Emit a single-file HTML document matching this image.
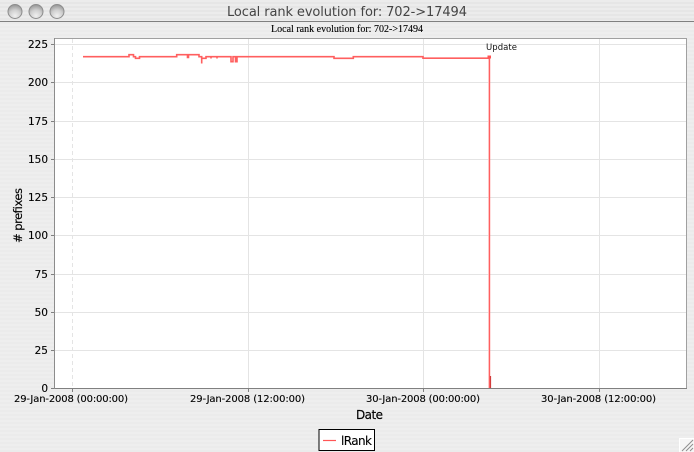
<!DOCTYPE html>
<html><head><meta charset="utf-8"><style>
html,body{margin:0;padding:0;width:694px;height:452px;overflow:hidden;background:#eee}
svg{display:block}
text{font-family:"DejaVu Sans","Liberation Sans",sans-serif}
</style></head><body>
<svg width="694" height="452" viewBox="0 0 694 452" xmlns="http://www.w3.org/2000/svg">
<defs>
<pattern id="st" width="4" height="4" patternUnits="userSpaceOnUse"><rect width="4" height="2" fill="#eeeeee"/><rect y="2" width="4" height="2" fill="#ebebeb"/></pattern>
<pattern id="tb" width="4" height="4" patternUnits="userSpaceOnUse"><rect width="4" height="2" fill="#ececec"/><rect y="2" width="4" height="2" fill="#e6e6e6"/></pattern>
<radialGradient id="b" cx="50%" cy="80%" r="75%"><stop offset="0" stop-color="#f0f0f0"/><stop offset="0.55" stop-color="#cfcfcf"/><stop offset="1" stop-color="#9a9a9a"/></radialGradient>
</defs>
<rect width="694" height="452" fill="url(#st)"/>
<rect width="694" height="21" fill="url(#tb)"/>
<rect y="21" width="694" height="1" fill="#808080"/>
<g stroke="#8c8c8c" stroke-width="1" fill="url(#b)"><circle cx="15" cy="11.5" r="7"/><circle cx="36" cy="11.5" r="7"/><circle cx="57" cy="11.5" r="7"/></g>
<text x="227" y="16" font-size="13" fill="#454545" textLength="240" lengthAdjust="spacing">Local rank evolution for: 702-&gt;17494</text>
<text x="271" y="32" font-size="10" fill="#000" stroke="#000" stroke-width="0.12" style="font-family:'Liberation Serif',serif" textLength="152" lengthAdjust="spacing">Local rank evolution for: 702-&gt;17494</text>

<rect x="54.5" y="38.5" width="632" height="350" fill="#fff" stroke="#a0a0a0"/>
<g stroke="#e4e4e4" stroke-width="1">
<path d="M55 44.5H686M55 82.5H686M55 121.5H686M55 159.5H686M55 197.5H686M55 235.5H686M55 274.5H686M55 312.5H686M55 350.5H686"/>
<path d="M248.5 39V388M423.5 39V388M599.5 39V388"/>
<path d="M72.5 39V388" stroke-dasharray="4 3"/>
</g>
<path d="M54 388.5H687" stroke="#808080"/>
<path d="M54.5 38V389" stroke="#8c8c8c"/>
<g stroke="#808080"><path d="M51 44.5H54M51 82.5H54M51 121.5H54M51 159.5H54M51 197.5H54M51 235.5H54M51 274.5H54M51 312.5H54M51 350.5H54M51 388.5H54M72.5 389V392M248.5 389V392M423.5 389V392M599.5 389V392"/></g>

<path fill="none" stroke="#ff5f5f" stroke-width="1.6" d="M83 56.7H129V54.7H133.5V56.7H135.5V58.3H139.5V56.7H176.7V54.7H187.5V57.5H188.5V54.7H199V56.7H201.7V63.5V58.3H206V56.7H211V58.5V56.7H217V58.5V56.7H231V61.7H233V56.7H235.5V61.7H237V56.7H334V58.3H353.3V56.7H423V58.2H489.4V388"/>
<path d="M487.5 55.5h3.5v3h-3.5z" fill="#ff5555"/>
<path d="M490.5 376V388" stroke="#d23c3c" stroke-width="1.2"/>
<path d="M488.6 60V388" stroke="#ffb8b8" stroke-width="0.8"/>
<text x="486" y="50" font-size="8.5" fill="#111" textLength="31" lengthAdjust="spacing">Update</text>

<g font-size="10.5" fill="#000" stroke="#000" stroke-width="0.12" text-anchor="end">
<text x="48" y="48">225</text><text x="48" y="86">200</text><text x="48" y="125">175</text><text x="48" y="163">150</text><text x="48" y="201">125</text><text x="48" y="239">100</text><text x="48" y="278">75</text><text x="48" y="316">50</text><text x="48" y="354">25</text><text x="48" y="392">0</text>
</g>
<g font-size="10" fill="#000" stroke="#000" stroke-width="0.12">
<text x="14" y="402" textLength="114" lengthAdjust="spacing">29-Jan-2008 (00:00:00)</text>
<text x="190" y="402" textLength="115" lengthAdjust="spacing">29-Jan-2008 (12:00:00)</text>
<text x="366" y="402" textLength="114" lengthAdjust="spacing">30-Jan-2008 (00:00:00)</text>
<text x="541" y="402" textLength="115" lengthAdjust="spacing">30-Jan-2008 (12:00:00)</text>
</g>
<text x="356" y="419" font-size="12" fill="#000" stroke="#000" stroke-width="0.15" textLength="27" lengthAdjust="spacing">Date</text>
<text transform="translate(22,243) rotate(-90)" font-size="11.5" fill="#000" stroke="#000" stroke-width="0.15" textLength="55" lengthAdjust="spacing"># prefixes</text>

<rect x="319" y="429.5" width="55.5" height="21" fill="#fff" stroke="#000"/>
<path d="M323 440.5H336" stroke="#ff5555" stroke-width="1.2"/>
<text x="341" y="445" font-size="12" fill="#000" stroke="#000" stroke-width="0.1" textLength="31" lengthAdjust="spacing">lRank</text>

<path d="M679 452V438H694V452Z" fill="#f6f6f6"/>
<path d="M679 438.5H694M679.5 438V452" stroke="#fff"/>
<path d="M682 451L693 440M686 451L693 444M690 451L693 448" stroke="#8e8e8e" stroke-width="1" fill="none"/>
</svg>
</body></html>
